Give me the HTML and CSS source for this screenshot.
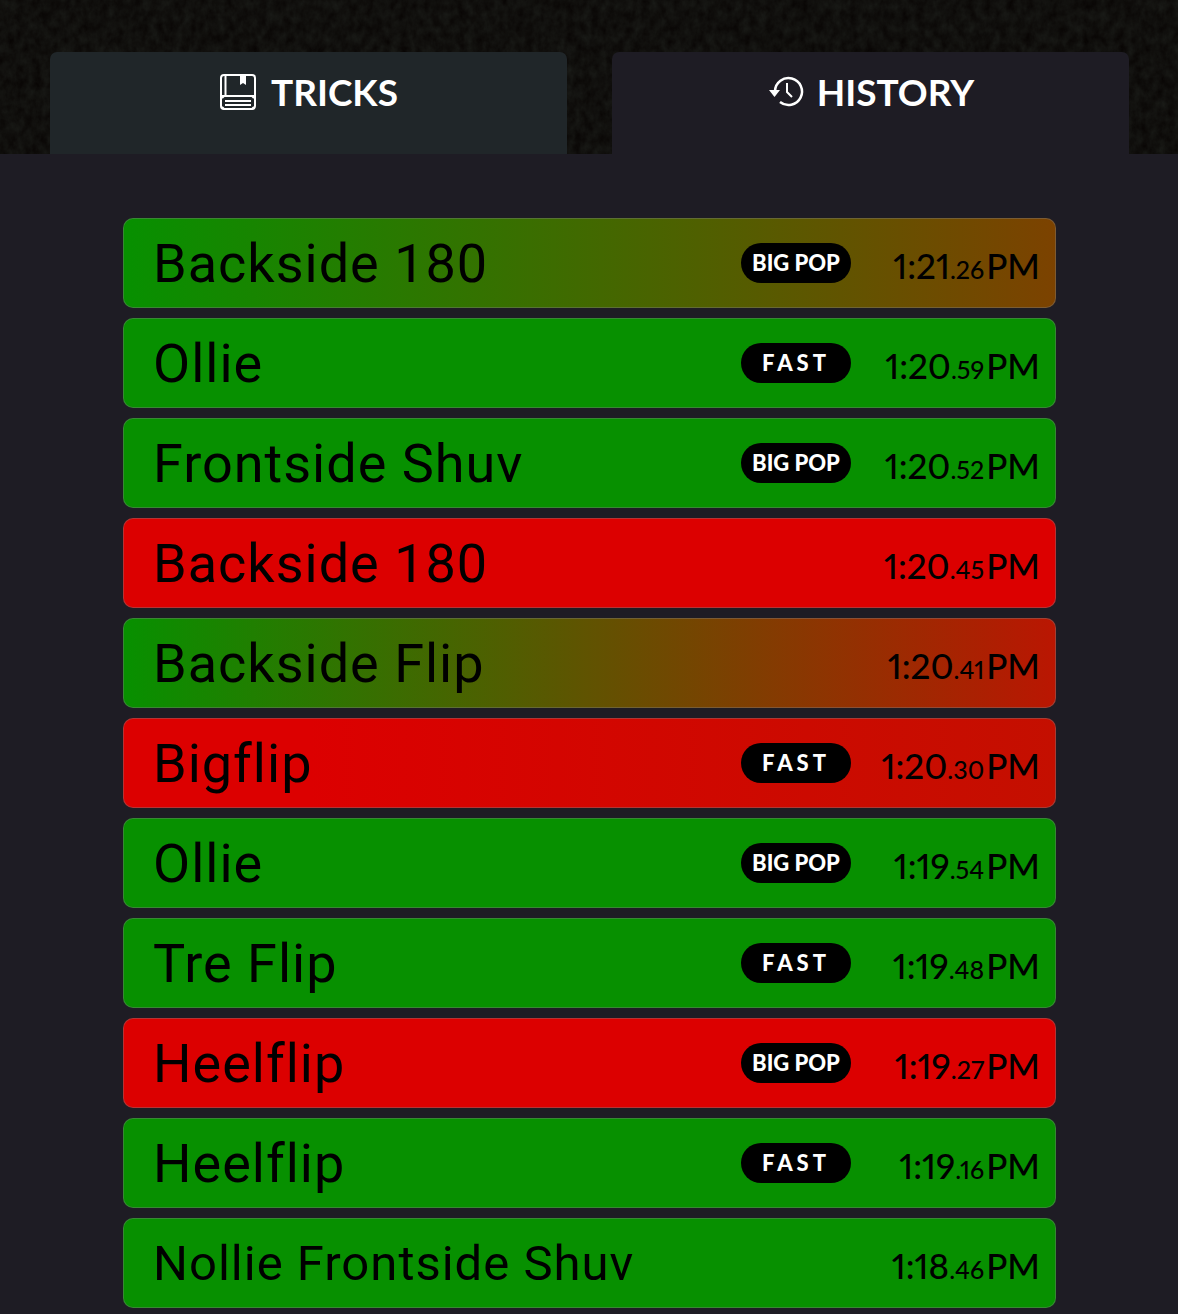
FILE: index.html
```
<!DOCTYPE html>
<html lang="en">
<head>
    <meta charset="UTF-8">
    <meta name="viewport" content="width=device-width, initial-scale=1.0">
    <title>Trick History</title>
    <link rel="stylesheet" href="styles.css">
</head>
<body>
    <header class="top">
        <!-- asphalt texture -->
        <svg class="asphalt" aria-hidden="true">
            <filter id="grain" x="0" y="0" width="100%" height="100%" color-interpolation-filters="sRGB">
                <feTurbulence type="fractalNoise" baseFrequency="0.12 0.09" numOctaves="5" seed="8"/>
                <feColorMatrix values="0.08 0 0 0 0.024  0.10 0 0 0 0.010  0.09 0 0 0 0.006  0 0 0 0 1"/>
            </filter>
            <rect width="100%" height="100%" filter="url(#grain)"/>
        </svg>
        <nav class="tabs">
            <button type="button" class="tab">
                <svg class="icon" width="38" height="38" viewBox="0 0 38 38" fill="none" stroke="#fff" aria-hidden="true">
                    <rect x="2" y="2" width="34" height="34" rx="3" stroke-width="2"/>
                    <path d="M6.500 3v20" stroke-width="2"/>
                    <path d="M2 23h34" stroke-width="2"/>
                    <path d="M21 2h6v10l-3-2-3 2z" fill="#fff" stroke="none"/>
                    <path d="M3 25l2-2M3 34l2 2M35 25l-2-2M35 34l-2 2" stroke-width="2"/>
                    <path d="M6 28h26M6 32h26" stroke-width="2"/>
                </svg>
                TRICKS
            </button>
            <button type="button" class="tab active">
                <svg class="icon" width="38" height="38" viewBox="0 0 38 38" fill="none" stroke="#fff" aria-hidden="true">
                    <path d="M8 18a13.500 13.500 0 1 1 5 11" stroke-width="2.500"/>
                    <path d="M2 17h11l-5.500 7z" fill="#fff" stroke="none"/>
                    <path d="M20 10v9l5 5" stroke-width="2"/>
                </svg>
                HISTORY
            </button>
        </nav>
    </header>

    <main class="panel">
        <ul class="history">
            <li class="row landed half">
                <span class="name">Backside 180</span>
                <span class="tag pop">BIG POP</span>
                <time>1:21<small>.26</small>PM</time>
            </li>
            <li class="row landed">
                <span class="name">Ollie</span>
                <span class="tag fast">FAST</span>
                <time>1:20<small>.59</small>PM</time>
            </li>
            <li class="row landed">
                <span class="name">Frontside Shuv</span>
                <span class="tag pop">BIG POP</span>
                <time>1:20<small>.52</small>PM</time>
            </li>
            <li class="row missed">
                <span class="name">Backside 180</span>
                <time>1:20<small>.45</small>PM</time>
            </li>
            <li class="row landed sketchy">
                <span class="name">Backside Flip</span>
                <time>1:20<small>.41</small>PM</time>
            </li>
            <li class="row missed close">
                <span class="name">Bigflip</span>
                <span class="tag fast">FAST</span>
                <time>1:20<small>.30</small>PM</time>
            </li>
            <li class="row landed">
                <span class="name">Ollie</span>
                <span class="tag pop">BIG POP</span>
                <time>1:19<small>.54</small>PM</time>
            </li>
            <li class="row landed">
                <span class="name">Tre Flip</span>
                <span class="tag fast">FAST</span>
                <time>1:19<small>.48</small>PM</time>
            </li>
            <li class="row missed">
                <span class="name">Heelflip</span>
                <span class="tag pop">BIG POP</span>
                <time>1:19<small>.27</small>PM</time>
            </li>
            <li class="row landed">
                <span class="name">Heelflip</span>
                <span class="tag fast">FAST</span>
                <time>1:19<small>.16</small>PM</time>
            </li>
            <li class="row landed">
                <span class="name long">Nollie Frontside Shuv</span>
                <time>1:18<small>.46</small>PM</time>
            </li>
        </ul>
    </main>
</body>
</html>
```
FILE: styles.css
```
* {
    box-sizing: border-box;
}

body {
    margin: 0;
    background: #1e1c24;
    font-family: Lato, sans-serif;
    color: #000;
}

.top {
    position: relative;
    padding: 52px 49px 0 50px;
    background: #100f0d;
}

.asphalt {
    position: absolute;
    inset: 0;
    width: 100%;
    height: 100%;
}

.tabs {
    position: relative;
    display: grid;
    grid-template-columns: 1fr 1fr;
    gap: 45px;
}

.tab {
    display: flex;
    justify-content: center;
    align-items: center;
    gap: 14px;
    padding: 16px 0 38px;
    border: none;
    border-radius: 7px 7px 0 0;
    background: #202629;
    color: #fff;
    font-family: Lato, sans-serif;
    font-size: 37px;
    font-weight: 700;
    line-height: 48px;
    cursor: pointer;
}

.tab.active {
    gap: 12px;
    background: #1e1c24;
}

.panel {
    padding: 64px 122px 6px 123px;
}

.history {
    display: flex;
    flex-direction: column;
    gap: 10px;
    margin: 0;
    padding: 0;
    list-style: none;
}

.row {
    display: flex;
    align-items: center;
    height: 90px;
    padding: 0 15px 0 29px;
    border: 1px solid rgba(128, 128, 128, 0.4);
    border-radius: 10px;
    background-origin: border-box;
}

.landed {
    background-color: #079000;
}

.missed {
    background-color: #dc0000;
}

.half {
    background-image: linear-gradient(90deg, #079000, #7c4200);
}

.sketchy {
    background-image: linear-gradient(90deg, #079000, #ba1602);
}

.close {
    background-image: linear-gradient(90deg, #dc0000 20%, #c40f00);
}

.name {
    flex: 1;
    font-family: Roboto, sans-serif;
    font-size: 54px;
    letter-spacing: 1px;
    white-space: nowrap;
}

.name.long {
    font-size: 49px;
}

.tag {
    width: 110px;
    border-radius: 20px;
    background: #000;
    color: #fff;
    font-size: 22px;
    font-weight: 900;
    line-height: 40px;
    text-align: center;
}

.fast {
    letter-spacing: 4px;
}

time {
    width: 189px;
    padding-top: 4px;
    font-size: 35px;
    font-weight: 500;
    font-variant-numeric: proportional-nums;
    text-align: right;
}

small {
    margin-right: 2px;
    font-size: 25px;
}
```
